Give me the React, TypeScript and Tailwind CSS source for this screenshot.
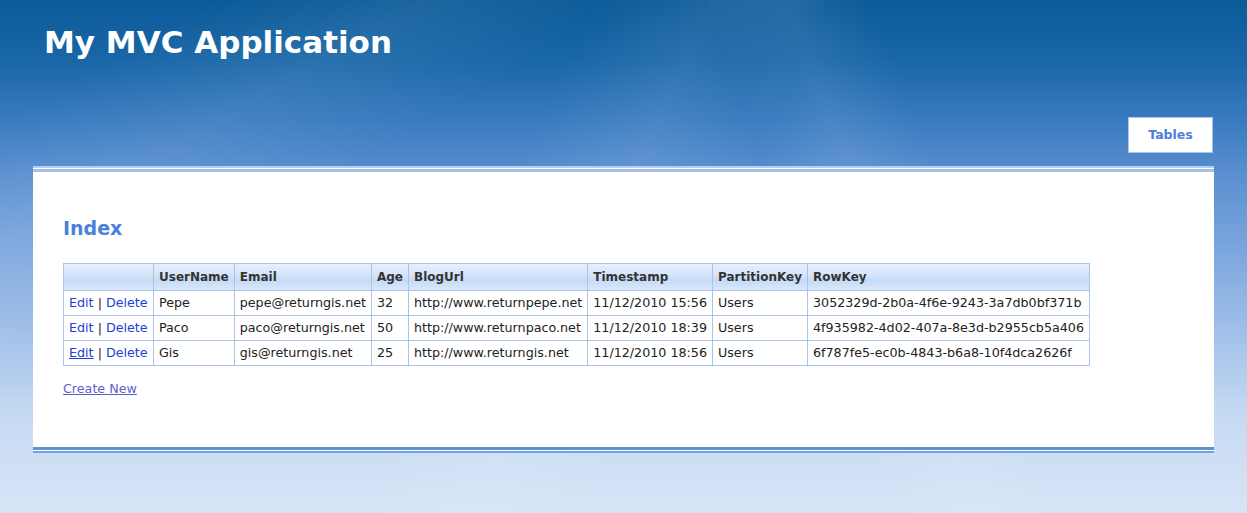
import React from 'react';

const rows = [
  {
    user: 'Pepe',
    email: 'pepe@returngis.net',
    age: '32',
    blog: 'http://www.returnpepe.net',
    ts: '11/12/2010 15:56',
    pk: 'Users',
    rk: '3052329d-2b0a-4f6e-9243-3a7db0bf371b',
  },
  {
    user: 'Paco',
    email: 'paco@returngis.net',
    age: '50',
    blog: 'http://www.returnpaco.net',
    ts: '11/12/2010 18:39',
    pk: 'Users',
    rk: '4f935982-4d02-407a-8e3d-b2955cb5a406',
  },
  {
    user: 'Gis',
    email: 'gis@returngis.net',
    age: '25',
    blog: 'http://www.returngis.net',
    ts: '11/12/2010 18:56',
    pk: 'Users',
    rk: '6f787fe5-ec0b-4843-b6a8-10f4dca2626f',
  },
];

const headers = ['', 'UserName', 'Email', 'Age', 'BlogUrl', 'Timestamp', 'PartitionKey', 'RowKey'];

export default function App() {
  return (
    <div
      className="relative min-h-[513px] w-full overflow-hidden bg-[linear-gradient(180deg,#0b5a98_0%,#1a67a8_12%,#3a7cc0_24%,#5a8fd0_34%,#7aa5dd_48%,#a4c2ea_66%,#c8dbf3_82%,#d6e4f6_100%)] text-[#222] [font-family:'DejaVu_Sans',Verdana,sans-serif]"
    >
      {/* light streaks */}
      <div className="pointer-events-none absolute inset-0 bg-[linear-gradient(115deg,transparent_40%,rgba(255,255,255,0.08)_48%,transparent_56%)]" />
      <div className="pointer-events-none absolute inset-0 bg-[linear-gradient(70deg,transparent_62%,rgba(255,255,255,0.08)_68%,transparent_74%)]" />
      <div className="pointer-events-none absolute inset-0 bg-[linear-gradient(150deg,transparent_10%,rgba(255,255,255,0.07)_20%,transparent_30%)]" />

      <div className="relative px-[33px]">
        {/* header */}
        <div className="h-[117px] pl-[11px] pt-[20px]">
          <h1 className="text-[31px] font-bold leading-[44px] text-white">My MVC Application</h1>
        </div>
        <div className="flex h-[49px] justify-end pr-[1px]">
          <div className="flex h-[36px] w-[85px] items-center justify-center border border-[#a9c6ec] bg-white text-[12.5px] font-bold text-[#4a80dc]">
            Tables
          </div>
        </div>

        {/* main panel */}
        <div className="bg-white">
          <div className="h-[2px] bg-[#b5cdee]" />
          <div className="h-px bg-white" />
          <div className="h-[3px] bg-[#a3c0e8]" />
          <div className="px-[30px] pb-[47px] pt-[43px]">
            <h2 className="text-[19px] font-bold leading-[26px] text-[#4a80dc]">Index</h2>
            <table className="mt-[22px] border-collapse text-[12.7px]">
              <thead>
                <tr className="bg-[linear-gradient(180deg,#e6f0fc_0%,#d2e3f9_45%,#c4daf6_60%,#dde9fa_100%)]">
                  {headers.map((h, i) => (
                    <th
                      key={i}
                      className={`h-[27px] border border-[#a9c4e8] px-[5px] text-left text-[12px] font-bold text-[#333] ${i === 0 ? 'w-[90px]' : ''}`}
                    >
                      {h}
                    </th>
                  ))}
                </tr>
              </thead>
              <tbody>
                {rows.map((r, i) => (
                  <tr key={i}>
                    <td className="h-[25px] whitespace-nowrap border border-[#a9c4e8] px-[5px]">
                      <a className={`text-[#1d3fd8] ${i === 2 ? 'underline' : ''}`} href="#">
                        Edit
                      </a>{' '}
                      |{' '}
                      <a className="text-[#1d3fd8]" href="#">
                        Delete
                      </a>
                    </td>
                    <td className="border border-[#a9c4e8] px-[5px]">{r.user}</td>
                    <td className="border border-[#a9c4e8] px-[5px]">{r.email}</td>
                    <td className="border border-[#a9c4e8] px-[5px]">{r.age}</td>
                    <td className="border border-[#a9c4e8] px-[5px]">{r.blog}</td>
                    <td className="border border-[#a9c4e8] px-[5px]">{r.ts}</td>
                    <td className="border border-[#a9c4e8] px-[5px]">{r.pk}</td>
                    <td className="border border-[#a9c4e8] px-[5px]">{r.rk}</td>
                  </tr>
                ))}
              </tbody>
            </table>
            <div className="mt-[10px]">
              <a href="#" className="text-[12.7px] text-[#5a5fcb] underline">
                Create New
              </a>
            </div>
          </div>
          <div className="h-[3px] bg-[#5b93d0]" />
          <div className="h-px bg-white" />
          <div className="h-[2px] bg-[#73a3dc]" />
        </div>
      </div>
    </div>
  );
}
